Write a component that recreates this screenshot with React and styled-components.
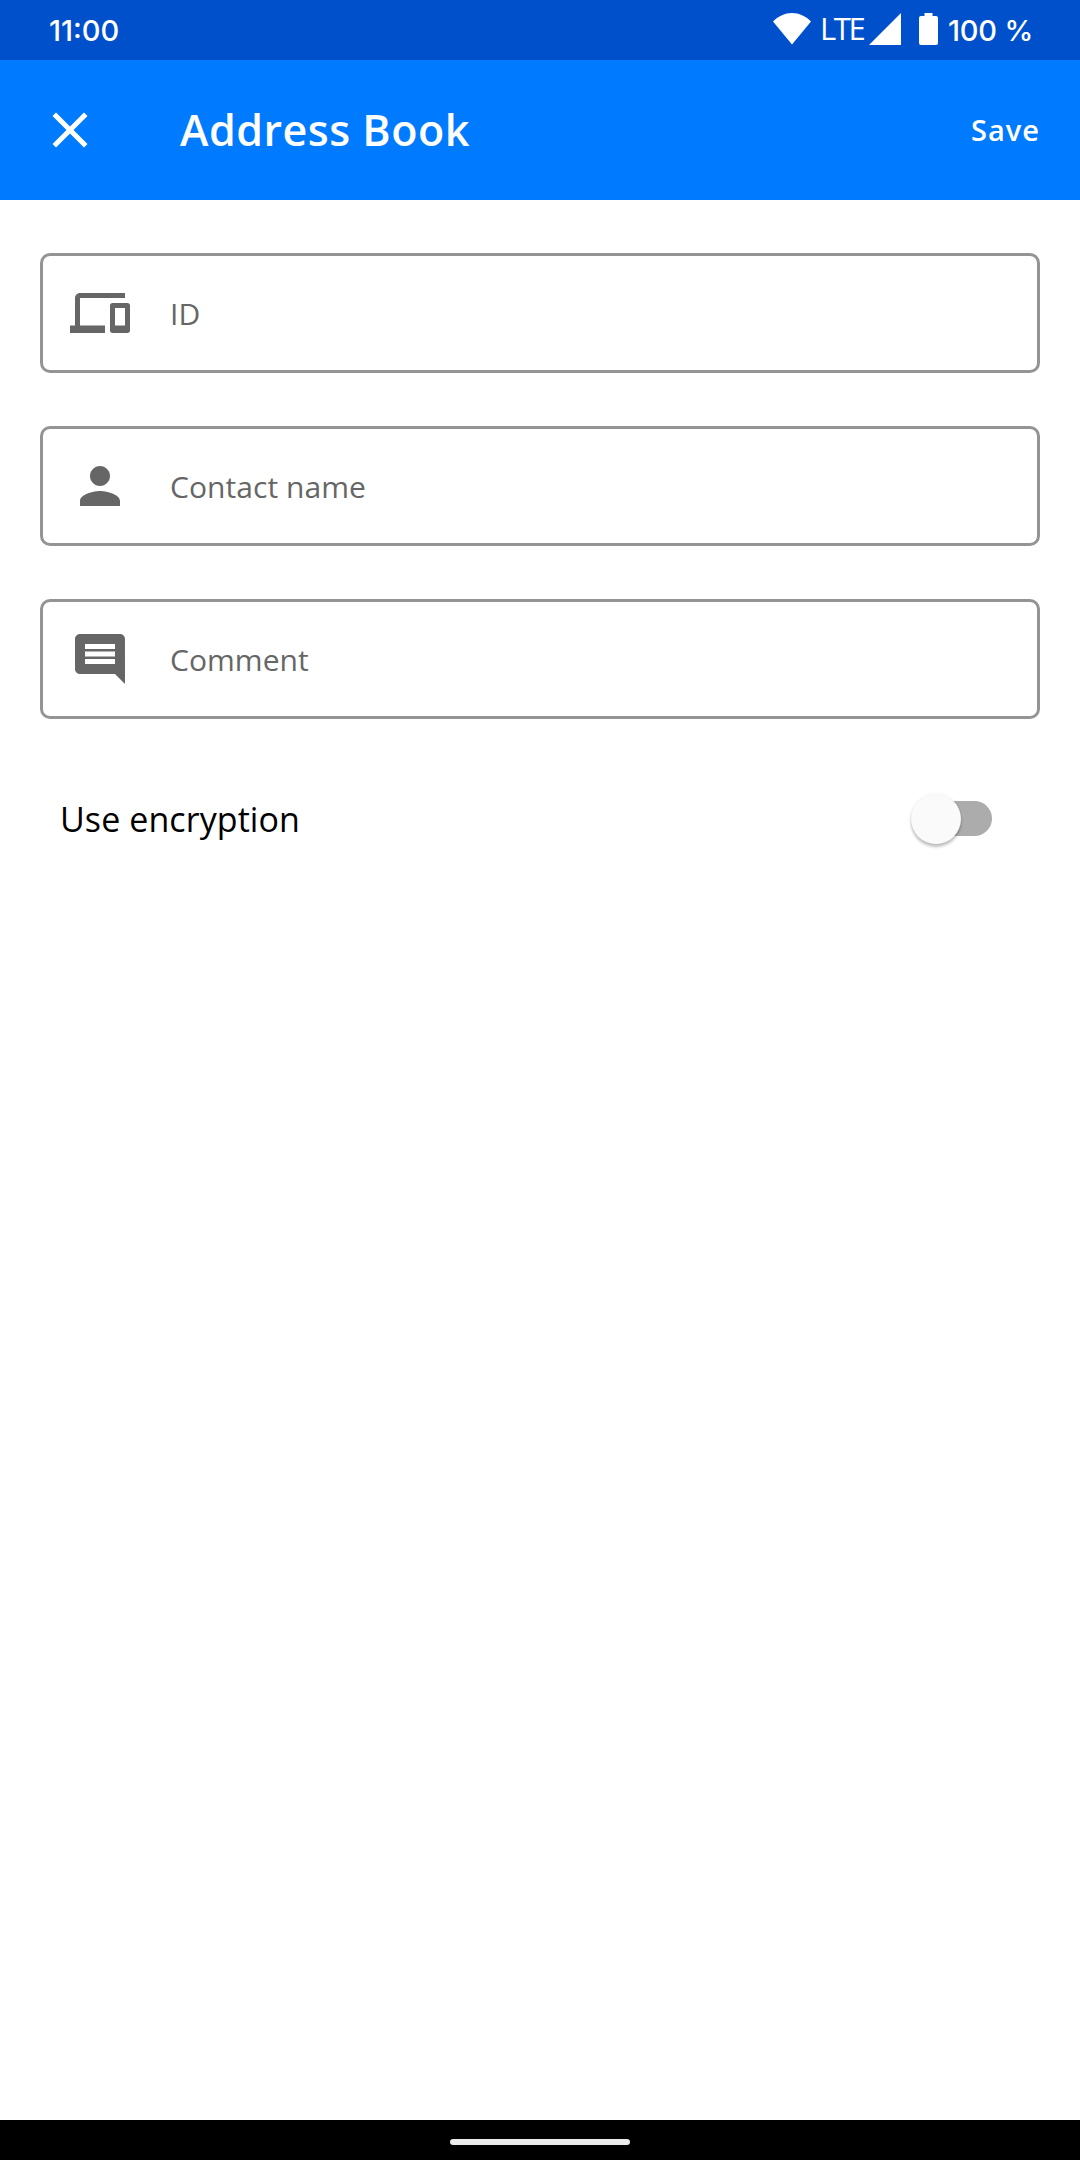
import styled, { createGlobalStyle } from 'styled-components';

const COLORS = {
  statusBar: '#0050cc',
  appBar: '#007bff',
  outline: '#949494',
  grey: '#666666',
  track: '#acacac',
  thumb: '#fafafa',
};

const FIELDS = [
  {
    label: 'ID',
    icon: 'M4 6h18V4H4c-1.1 0-2 .9-2 2v11H0v3h14v-3H4V6zm19 2h-6c-.55 0-1 .45-1 1v10c0 .55.45 1 1 1h6c.55 0 1-.45 1-1V9c0-.55-.45-1-1-1zm-1 9h-4v-7h4v7z',
  },
  {
    label: 'Contact name',
    icon: 'M12 12c2.21 0 4-1.79 4-4s-1.79-4-4-4-4 1.79-4 4 1.79 4 4 4zm0 2c-2.67 0-8 1.34-8 4v2h16v-2c0-2.66-5.33-4-8-4z',
  },
  {
    label: 'Comment',
    icon: 'M21.99 4c0-1.1-.89-2-1.99-2H4c-1.1 0-2 .9-2 2v12c0 1.1.9 2 2 2h14l4 4-.01-18zM18 14H6v-2h12v2zm0-3H6V9h12v2zm0-3H6V6h12v2z',
  },
];

const Icon = ({ path }) => (
  <IconSvg viewBox="0 0 24 24">
    <path d={path} />
  </IconSvg>
);

const App = () => {
  return (
    <Screen>
      <GlobalStyle />

      <StatusBar>
        <Clock>11:00</Clock>
        <StatusIcon width="38" height="32" viewBox="0 0 38 32">
          <path d="M0 8.5C5.500 3 12 0 19 0s13.500 3 19 8.500L19 31.500z" />
        </StatusIcon>
        <Network>LTE</Network>
        <StatusIcon width="32" height="32" viewBox="0 0 32 32">
          <path d="M32 0v32H0z" />
        </StatusIcon>
        <Battery width="19" height="32" viewBox="0 0 19 32">
          <path d="M5.500 0h8v3H17a2 2 0 0 1 2 2v25a2 2 0 0 1-2 2H2a2 2 0 0 1-2-2V5a2 2 0 0 1 2-2h3.500z" />
        </Battery>
        <Percent>100 %</Percent>
      </StatusBar>

      <AppBar>
        <Icon path="M19 6.410 17.590 5 12 10.590 6.410 5 5 6.410 10.590 12 5 17.590 6.410 19 12 13.410 17.590 19 19 17.590 13.410 12z" />
        <Title>Address Book</Title>
        <SaveButton>Save</SaveButton>
      </AppBar>

      <Form>
        {FIELDS.map(({ label, icon }) => (
          <Field key={label}>
            <Icon path={icon} />
            <Label>{label}</Label>
          </Field>
        ))}
        <SwitchRow>
          <SwitchLabel>Use encryption</SwitchLabel>
          <Track>
            <Thumb />
          </Track>
        </SwitchRow>
      </Form>

      <NavBar>
        <NavHandle />
      </NavBar>
    </Screen>
  );
};

const GlobalStyle = createGlobalStyle`
  * {
    box-sizing: border-box;
  }

  body {
    margin: 0;
    background: #fff;
  }
`;

const Screen = styled.div`
  width: 1080px;
  height: 2160px;
  display: flex;
  flex-direction: column;
  background: #fff;
  font-family: 'Open Sans', sans-serif;
  white-space: nowrap;
`;

const StatusBar = styled.header`
  height: 60px;
  flex: none;
  display: flex;
  align-items: center;
  padding: 0 48px 2px 49px;
  background: ${COLORS.statusBar};
  color: #fff;
`;

const Clock = styled.span`
  margin-right: auto;
  padding-top: 3px;
  font-family: Inter, sans-serif;
  font-size: 29px;
  font-weight: 500;
`;

const StatusIcon = styled.svg`
  flex: none;
  fill: currentColor;
`;

const Network = styled.span`
  width: 50px;
  margin-left: 8px;
  padding-left: 1px;
  padding-bottom: 2px;
  font-size: 31px;
  letter-spacing: -2.4px;
`;

const Battery = styled(StatusIcon)`
  margin: 0 10px 0 18px;
`;

const Percent = styled.span`
  width: 84px;
  padding-top: 3px;
  font-family: Inter, sans-serif;
  font-size: 29px;
  font-weight: 500;
  letter-spacing: -0.2px;
`;

const AppBar = styled.div`
  height: 140px;
  flex: none;
  display: flex;
  align-items: center;
  padding: 0 40px;
  background: ${COLORS.appBar};
  color: #fff;
`;

const IconSvg = styled.svg`
  width: 60px;
  height: 60px;
  flex: none;
  fill: currentColor;
`;

const Title = styled.h1`
  margin: 0 auto 0 80px;
  padding-bottom: 2px;
  font-size: 43px;
  font-weight: 600;
  letter-spacing: 0.5px;
`;

const SaveButton = styled.button`
  padding: 0 0 2px;
  border: none;
  background: none;
  color: inherit;
  font: 600 29px 'Open Sans', sans-serif;
  letter-spacing: 1px;
`;

const Form = styled.form`
  flex: 1;
  display: flex;
  flex-direction: column;
  gap: 53px;
  padding: 53px 40px 0;
`;

const Field = styled.div`
  height: 120px;
  display: flex;
  align-items: center;
  gap: 40px;
  padding: 0 27px;
  border: 3px solid ${COLORS.outline};
  border-radius: 10px;
  color: ${COLORS.grey};
`;

const Label = styled.label`
  font-size: 30px;
  letter-spacing: 0.05px;
`;

const SwitchRow = styled.div`
  height: 93px;
  display: flex;
  align-items: center;
  justify-content: space-between;
  padding: 0 48px 0 20px;
`;

const SwitchLabel = styled.label`
  font-size: 34px;
  letter-spacing: 0.08px;
  color: #000;
`;

const Track = styled.div`
  width: 77px;
  height: 35px;
  display: flex;
  align-items: center;
  border-radius: 18px;
  background: ${COLORS.track};
`;

const Thumb = styled.div`
  width: 50px;
  height: 50px;
  flex: none;
  margin-left: -4px;
  border-radius: 50%;
  background: ${COLORS.thumb};
  box-shadow: 0 3px 3px rgba(0, 0, 0, 0.24), 0 0 3px rgba(0, 0, 0, 0.08);
`;

const NavBar = styled.footer`
  height: 40px;
  flex: none;
  display: flex;
  justify-content: center;
  padding-top: 19px;
  background: #000;
`;

const NavHandle = styled.div`
  width: 180px;
  height: 6px;
  border-radius: 3px;
  background: #ebebeb;
`;

export default App;
